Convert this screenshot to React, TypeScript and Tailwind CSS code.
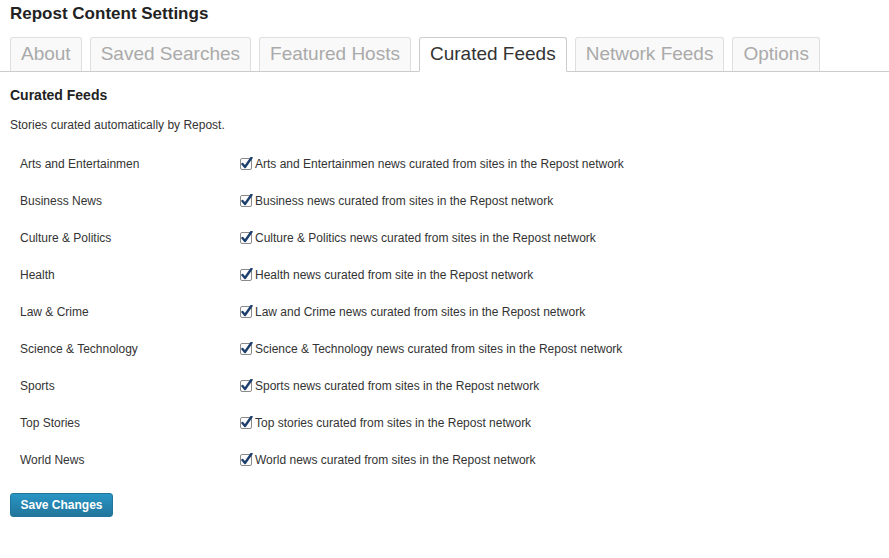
const tabs = ["About", "Saved Searches", "Featured Hosts", "Curated Feeds", "Network Feeds", "Options"];

const feeds = [
  ["Arts and Entertainmen", "Arts and Entertainmen news curated from sites in the Repost network"],
  ["Business News", "Business news curated from sites in the Repost network"],
  ["Culture & Politics", "Culture & Politics news curated from sites in the Repost network"],
  ["Health", "Health news curated from site in the Repost network"],
  ["Law & Crime", "Law and Crime news curated from sites in the Repost network"],
  ["Science & Technology", "Science & Technology news curated from sites in the Repost network"],
  ["Sports", "Sports news curated from sites in the Repost network"],
  ["Top Stories", "Top stories curated from sites in the Repost network"],
  ["World News", "World news curated from sites in the Repost network"],
];

function Check() {
  return (
    <svg width="14" height="14" viewBox="0 0 14 14" className="shrink-0">
      <rect x="0.5" y="1.5" width="11" height="11" rx="1.5" fill="#fdfdfd" stroke="#8a8a8a" />
      <path d="M2.5 7 L5 10 L11.5 0.8" fill="none" stroke="#1d3f6e" strokeWidth="2.4" strokeLinecap="round" strokeLinejoin="round" />
    </svg>
  );
}

export default function App() {
  return (
    <div className="w-[889px] h-[558px] bg-white text-[#333] font-['Liberation_Sans',Arial,sans-serif] overflow-hidden">
      <h1 className="m-0 pl-[10px] pt-[4px] text-[17px] leading-[20px] font-bold text-[#222]">Repost Content Settings</h1>
      <div className="flex items-end gap-[8px] pl-[10px] mt-[13px] border-b border-[#ccc] h-[35px]">
        {tabs.map((t) => {
          const active = t === "Curated Feeds";
          return (
            <div
              key={t}
              className={
                active
                  ? "h-[35px] -mb-px px-[10px] border border-[#ccc] border-b-white bg-white rounded-t-[3px] text-[19px] leading-[32px] text-[#333]"
                  : "h-[34px] px-[10px] border border-b-0 border-[#dfdfdf] bg-[#f9f9f9] rounded-t-[3px] text-[19px] leading-[32px] text-[#aaa]"
              }
            >
              {t}
            </div>
          );
        })}
      </div>
      <h3 className="m-0 pl-[10px] mt-[14px] text-[14px] leading-[18px] font-bold text-[#222]">Curated Feeds</h3>
      <p className="m-0 pl-[10px] mt-[14px] text-[12px] leading-[15px] text-[#333]">Stories curated automatically by Repost.</p>
      <div className="flex flex-col pl-[20px] mt-[12px]">
        {feeds.map(([label, desc]) => (
          <div key={label} className="flex items-center h-[37px] text-[12px]">
            <div className="w-[220px]">{label}</div>
            <div className="flex items-center gap-[1px]">
              <Check />
              <span>{desc}</span>
            </div>
          </div>
        ))}
      </div>
      <button className="ml-[10px] mt-[15px] w-[103px] h-[24px] rounded-[3px] border border-[#21759b] bg-gradient-to-b from-[#2a95c5] to-[#21759b] text-white text-[12px] font-bold">
        Save Changes
      </button>
    </div>
  );
}
